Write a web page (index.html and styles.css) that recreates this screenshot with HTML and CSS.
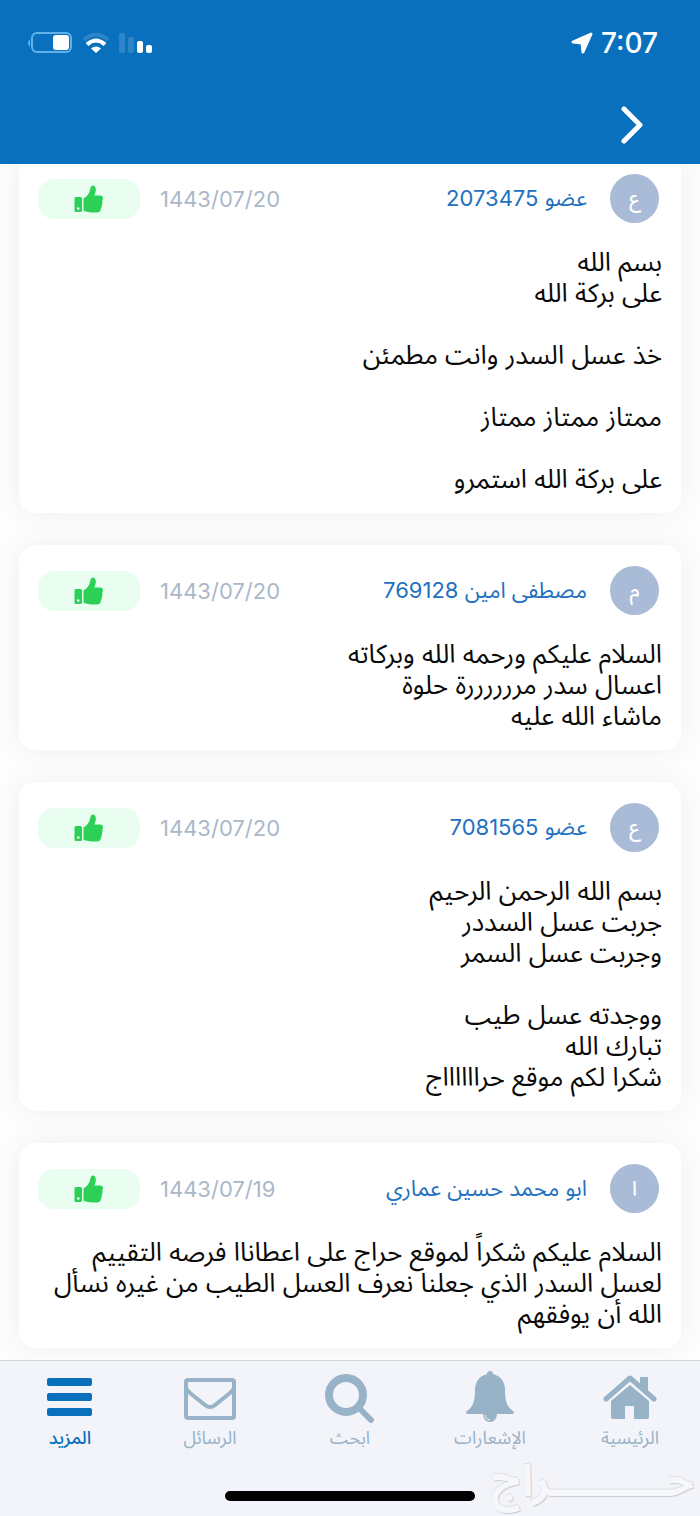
FILE: index.html
```html
<!DOCTYPE html>
<html lang="ar" dir="rtl">
<head>
    <meta charset="UTF-8">
    <meta name="viewport" content="width=device-width, initial-scale=1.0">
    <title>حراج</title>
    <link rel="stylesheet" href="styles.css">
</head>
<body>

<svg class="sprite" width="0" height="0" aria-hidden="true">
    <symbol id="thumb" viewBox="0 0 30 30">
        <path fill-rule="evenodd" d="M2 13h4.500q1.500 0 1.500 1.500v12q0 1.500-1.500 1.500H2Q.5 28 .5 26.500v-12Q.5 13 2 13zM4.300 23.200a1.300 1.300 0 1 0 0 2.600 1.300 1.300 0 0 0 0-2.600z"/>
        <path d="M9.500 14.500c3-1.500 5.500-5 6.300-7.500.5-2 .7-4 1.700-5 1-1 2.500-.6 3.400.4 1.400 1.600 1.100 4.500.3 6.600l-.7 2.500h5.500c2 0 3.200 1.200 3 2.800-.1 1-.6 1.600-.6 2.400 0 .8.200 1 .1 2.200-.1 1.200-.7 1.500-.7 2.300 0 .8 0 1.200-.2 2-.2.9-.7 1.200-.8 2.100-.2 2.300-1.700 3.200-4 3.200h-5c-3 0-5-1-7-1.200-.9 0-1.300-.5-1.300-1.300z"/>
    </symbol>
</svg>

<header class="header">
    <div class="status">
        <div class="status-time">
            <span>7:07</span>
            <svg width="22" height="22" viewBox="0 0 22 22" fill="#fff" stroke="#fff" stroke-width="3" stroke-linejoin="round"><path d="M20 2 2 10l9 1 1 9z"/></svg>
        </div>
        <div class="status-icons">
            <svg width="34" height="22" viewBox="0 0 34 22" fill="#fff">
                <rect x="0" y="1" width="6" height="20" rx="2" opacity=".15"/>
                <rect x="9" y="5" width="6" height="16" rx="2" opacity=".15"/>
                <rect x="18" y="9" width="6" height="12" rx="2"/>
                <rect x="27" y="13" width="6" height="8" rx="2"/>
            </svg>
            <svg width="28" height="22" viewBox="0 0 28 22" fill="none" stroke="#fff" stroke-width="4">
                <path d="M2 8Q14-3 26 8" opacity=".15"/>
                <path d="M5 12.500q9-8 18 0"/>
                <path d="M14 21l-5-4.500q5-4 10 0z" fill="#fff" stroke="none"/>
            </svg>
            <svg width="46" height="22" viewBox="0 0 46 22">
                <rect x="5" y="1" width="39" height="19" rx="5" fill="none" stroke="#5fb2ea" stroke-width="2"/>
                <path d="M3 7q-4 4 0 8z" fill="#5fb2ea"/>
                <rect x="26" y="3" width="16" height="15" rx="3" fill="#fff"/>
            </svg>
        </div>
    </div>
    <button class="back" aria-label="رجوع">
        <svg width="24" height="38" viewBox="0 0 24 38" fill="none" stroke="#fff" stroke-width="5" stroke-linecap="round" stroke-linejoin="round"><path d="M4 3l16 16L4 35"/></svg>
    </button>
</header>

<main class="reviews">
    <div class="list">
        <article class="card">
            <div class="card-head">
                <span class="avatar">ع</span>
                <a class="name" href="#">عضو 2073475</a>
                <time class="date">1443/07/20</time>
                <span class="like"><svg width="30" height="30"><use href="#thumb"/></svg></span>
            </div>
            <p class="text">بسم الله
على بركة الله

خذ عسل السدر وانت مطمئن

ممتاز ممتاز ممتاز

على بركة الله استمرو</p>
        </article>

        <article class="card">
            <div class="card-head">
                <span class="avatar">م</span>
                <a class="name" href="#">مصطفى امين 769128</a>
                <time class="date">1443/07/20</time>
                <span class="like"><svg width="30" height="30"><use href="#thumb"/></svg></span>
            </div>
            <p class="text">السلام عليكم ورحمه الله وبركاته
اعسال سدر مررررررة حلوة
ماشاء الله عليه</p>
        </article>

        <article class="card">
            <div class="card-head">
                <span class="avatar">ع</span>
                <a class="name" href="#">عضو 7081565</a>
                <time class="date">1443/07/20</time>
                <span class="like"><svg width="30" height="30"><use href="#thumb"/></svg></span>
            </div>
            <p class="text">بسم الله الرحمن الرحيم
جربت عسل السددر
وجربت عسل السمر

ووجدته عسل طيب
تبارك الله
شكرا لكم موقع حرااااااج</p>
        </article>

        <article class="card">
            <div class="card-head">
                <span class="avatar">ا</span>
                <a class="name" href="#">ابو محمد حسين عماري</a>
                <time class="date">1443/07/19</time>
                <span class="like"><svg width="30" height="30"><use href="#thumb"/></svg></span>
            </div>
            <p class="text">السلام عليكم شكراً لموقع حراج على اعطاناا فرصه التقييم لعسل السدر الذي جعلنا نعرف العسل الطيب من غيره نسأل الله أن يوفقهم</p>
        </article>
    </div>
</main>

<footer class="footer">
    <nav class="tabs">
        <a class="tab" href="#">
            <svg width="54" height="54" viewBox="0 0 54 54" fill="currentColor">
                <path d="M37 7h8v16l-8-7z"/>
                <path d="M3 29 27 8l24 21" fill="none" stroke="currentColor" stroke-width="5" stroke-linecap="round" stroke-linejoin="round"/>
                <path d="M27 15 8 31v16q0 2 2 2h12V36h9v13h13q2 0 2-2V31z"/>
            </svg>
            <span>الرئيسية</span>
        </a>
        <a class="tab" href="#">
            <svg width="54" height="54" viewBox="0 0 54 54" fill="currentColor">
                <path d="M27 1c2 0 3 1 3 3 8 2 12 8 12 16 0 11 2 17 8 21 2 2 1 3-1 3H5c-2 0-3-1-1-3 6-4 8-10 8-21 0-8 4-14 12-16 0-2 1-3 3-3z"/>
                <path d="M20 43h14c0 6-3 9-7 9s-7-3-7-9z"/>
                <path d="M22 45q0 4 5 5" fill="none" stroke="#f3f4f9" stroke-width="1"/>
            </svg>
            <span>الإشعارات</span>
        </a>
        <a class="tab" href="#">
            <svg width="54" height="54" viewBox="0 0 54 54" fill="none" stroke="currentColor">
                <circle cx="23" cy="25" r="17" stroke-width="8"/>
                <path d="m35 37 13 13" stroke-width="6" stroke-linecap="round"/>
            </svg>
            <span>ابحث</span>
        </a>
        <a class="tab" href="#">
            <svg width="54" height="54" viewBox="0 0 54 54" fill="none" stroke="currentColor" stroke-width="4" stroke-linejoin="round">
                <rect x="3" y="10" width="48" height="38" rx="2"/>
                <path d="M3 18q1 3 4 5l15 12q5 4 10 0l15-12q3-2 4-5"/>
            </svg>
            <span>الرسائل</span>
        </a>
        <a class="tab active" href="#">
            <svg width="54" height="54" viewBox="0 0 54 54" fill="currentColor">
                <rect x="4" y="8" width="45" height="8" rx="2"/>
                <rect x="4" y="23" width="45" height="8" rx="2"/>
                <rect x="4" y="38" width="45" height="8" rx="2"/>
            </svg>
            <span>المزيد</span>
        </a>
    </nav>
    <div class="home-bar"></div>
    <div class="watermark">حـــــــــراج</div>
</footer>

</body>
</html>
```
FILE: styles.css
```css
* {
    box-sizing: border-box;
}
body {
    display: flex;
    flex-direction: column;
    min-height: 100vh;
    margin: 0;
    background-color: #fdfdfd;
    font-family: Inter, "Noto Sans Arabic", "Noto Sans", "DejaVu Sans", sans-serif;
    color: #0a0a0a;
}
.sprite {
    position: absolute;
}
.header {
    position: relative;
    z-index: 1;
    display: flex;
    flex-direction: column;
    align-items: flex-start;
    gap: 45px;
    padding: 28px 42px 17px 27px;
    background-color: #0970be;
}
.status {
    display: flex;
    justify-content: space-between;
    align-items: center;
    width: 100%;
    height: 30px;
    color: #fff;
}
.status-time {
    display: flex;
    align-items: center;
    gap: 8px;
    font-size: 28px;
    font-weight: 500;
    line-height: 30px;
}
.status-icons {
    display: flex;
    gap: 9px;
}
.back {
    display: flex;
    align-items: center;
    height: 44px;
    margin: 0 14px;
    padding: 0;
    border: none;
    background: none;
}
/* 列表向上滚动了一点 */
.reviews {
    flex: 1;
}
.list {
    display: flex;
    flex-direction: column;
    gap: 32px;
    margin-top: -11px;
    padding: 0 19px 12px;
}
.card {
    padding: 21px 19px 19px;
    border-radius: 16px;
    background-color: #fff;
    box-shadow: 0 0 30px rgba(0, 0, 0, 0.06);
}
.card-head {
    display: flex;
    align-items: center;
    height: 49px;
    margin-bottom: 23px;
    padding-right: 3px;
}
.avatar {
    display: flex;
    justify-content: center;
    align-items: center;
    width: 49px;
    height: 49px;
    border-radius: 50%;
    background-color: #a9bbd7;
    color: #fff;
    font-size: 20px;
    font-weight: 500;
}
.name {
    margin-right: 23px;
    color: #2270c0;
    font-size: 22px;
    text-decoration: none;
}
.date {
    margin-right: auto;
    color: #aab8c8;
    font-size: 22px;
}
.like {
    display: flex;
    justify-content: center;
    align-items: center;
    width: 102px;
    height: 40px;
    margin-right: 20px;
    border-radius: 16px;
    background-color: #e9fdf0;
    fill: #2dd057;
}
.text {
    margin: 0;
    font-size: 26px;
    line-height: 31px;
    white-space: pre-line;
}
.footer {
    position: relative;
    display: flex;
    flex-direction: column;
    align-items: center;
    height: 156px;
    padding-top: 9px;
    border-top: 1px solid #d4d6da;
    background-color: #f3f4f9;
}
.tabs {
    display: flex;
    width: 100%;
}
.tab {
    display: flex;
    flex: 1;
    flex-direction: column;
    align-items: center;
    color: #98b2c7;
    font-size: 18px;
    line-height: 28px;
    text-decoration: none;
}
.active {
    color: #0970be;
    font-weight: 500;
}
.home-bar {
    width: 250px;
    height: 10px;
    margin-top: 39px;
    border-radius: 5px;
    background-color: #000;
}
/* 右下角的水印 */
.watermark {
    position: absolute;
    right: 6px;
    bottom: 14px;
    color: #f6f7fa;
    font-size: 44px;
    font-weight: bold;
    line-height: 44px;
    text-shadow: 1px 1px 1px #c9ccd4, 0 -1px 1px #dcdee4;
}
```
